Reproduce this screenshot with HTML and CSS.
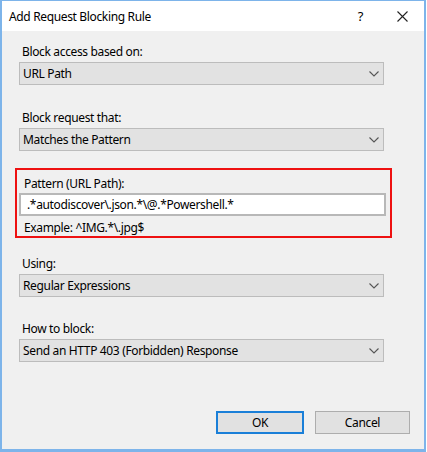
FILE: index.html
```html
<!DOCTYPE html>
<html>
<head>
<meta charset="utf-8">
<link rel="stylesheet" href="styles.css">
</head>
<body>
<div class="window">
  <div class="titlebar">
    <span class="title">Add Request Blocking Rule</span>
    <span class="help">?</span>
    <svg class="close" width="11" height="11" viewBox="0 0 11 11"><path d="M0.5 0.5 L10.5 10.5 M10.5 0.5 L0.5 10.5" stroke="#222" stroke-width="1.1" fill="none"/></svg>
  </div>
  <div class="content">
    <div class="label first">Block access based on:</div>
    <div class="combo"><span>URL Path</span><svg class="chev" width="10" height="6" viewBox="0 0 10 6"><path d="M0.5 0.5 L5 5 L9.5 0.5" stroke="#555" stroke-width="1.1" fill="none"/></svg></div>

    <div class="label gap">Block request that:</div>
    <div class="combo"><span>Matches the Pattern</span><svg class="chev" width="10" height="6" viewBox="0 0 10 6"><path d="M0.5 0.5 L5 5 L9.5 0.5" stroke="#555" stroke-width="1.1" fill="none"/></svg></div>

    <div class="highlight">
      <div class="label inner">Pattern (URL Path):</div>
      <div class="textbox">.*autodiscover\.json.*\@.*Powershell.*</div>
      <div class="example">Example: ^IMG.*\.jpg$</div>
    </div>

    <div class="label after-box">Using:</div>
    <div class="combo"><span>Regular Expressions</span><svg class="chev" width="10" height="6" viewBox="0 0 10 6"><path d="M0.5 0.5 L5 5 L9.5 0.5" stroke="#555" stroke-width="1.1" fill="none"/></svg></div>

    <div class="label gap2">How to block:</div>
    <div class="combo"><span>Send an HTTP 403 (Forbidden) Response</span><svg class="chev" width="10" height="6" viewBox="0 0 10 6"><path d="M0.5 0.5 L5 5 L9.5 0.5" stroke="#555" stroke-width="1.1" fill="none"/></svg></div>

    <div class="buttons">
      <div class="btn ok">OK</div>
      <div class="btn cancel">Cancel</div>
    </div>
  </div>
</div>
</body>
</html>
```

FILE: styles.css
```css
html, body {
  margin: 0;
  padding: 0;
  background: #ffffff;
}
body {
  width: 427px;
  height: 452px;
  overflow: hidden;
  font-family: "Noto Sans", "Open Sans", sans-serif;
  font-size: 12px;
  color: #000;
  letter-spacing: -0.35px;
}
.window {
  box-sizing: border-box;
  width: 426px;
  height: 452px;
  border: 2px solid #7db4ea;
  border-top: 1px solid #7db4ea;
  border-bottom-width: 3px;
  background: #f0f0f0;
  display: flex;
  flex-direction: column;
}
.titlebar {
  height: 30px;
  background: #ffffff;
  display: flex;
  align-items: center;
  padding-left: 7px;
  flex: none;
}
.title {
  flex: 1;
  font-size: 12px;
}
.help {
  font-size: 13px;
  margin-right: 34px;
}
.close {
  margin-right: 16px;
}
.content {
  padding: 0 0 0 17px;
  display: flex;
  flex-direction: column;
  flex: 1;
}
.label {
  line-height: 16px;
  height: 16px;
  padding-left: 3px;
}
.label.first { margin-top: 13px; }
.label.gap { margin-top: 25px; }
.label.after-box { margin-top: 18px; }
.label.gap2 { margin-top: 24px; }
.combo {
  box-sizing: border-box;
  width: 365px;
  height: 23px;
  margin-top: 2px;
  background: #e2e2e2;
  border: 1px solid #bcbcbc;
  display: flex;
  align-items: center;
  padding-left: 3px;
  padding-right: 4px;
}
.combo span { flex: 1; }
.highlight {
  box-sizing: border-box;
  width: 377px;
  margin-left: -4px;
  margin-top: 17px;
  height: 70px;
  border: 2px solid #ee1111;
  padding: 0 4px 0 2px;
  display: flex;
  flex-direction: column;
}
.label.inner {
  margin-top: 6px;
  padding-left: 5px;
}
.textbox {
  box-sizing: border-box;
  margin-top: 1px;
  height: 23px;
  background: #ffffff;
  border: 2px solid #b8b8b8;
  padding-left: 6px;
  line-height: 19px;
}
.example {
  margin-top: 5px;
  padding-left: 5px;
  line-height: 14px;
}
.buttons {
  display: flex;
  margin-top: 49px;
  margin-left: 197px;
  gap: 11px;
}
.btn {
  box-sizing: border-box;
  height: 23px;
  background: #e1e1e1;
  border: 1px solid #adadad;
  display: flex;
  align-items: center;
  justify-content: center;
}
.btn.ok {
  width: 88px;
  border: 2px solid #1a7fd8;
}
.btn.cancel {
  width: 95px;
}
```
